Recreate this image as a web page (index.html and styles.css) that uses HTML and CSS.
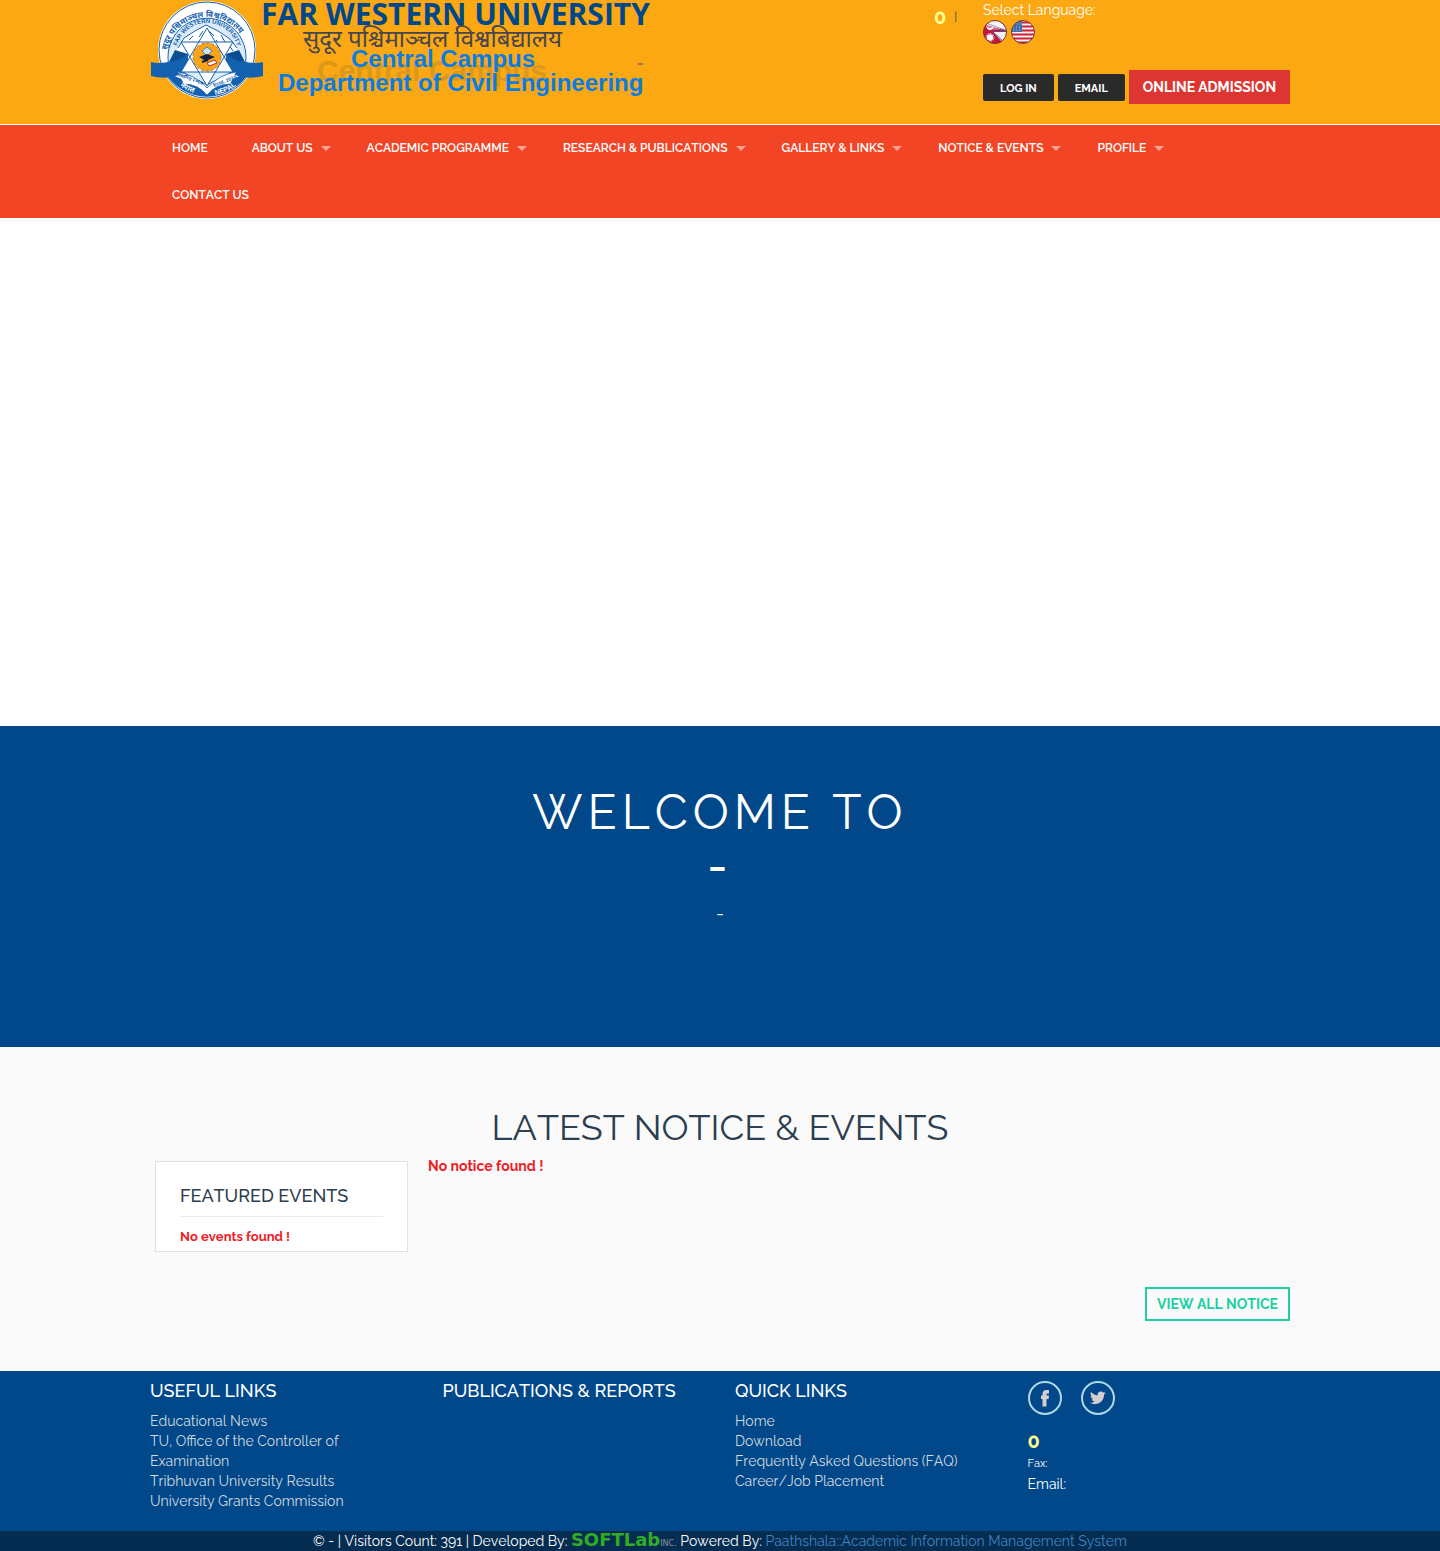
FILE: index.html
```html
<!DOCTYPE html>
<html lang="en">
<head>
<meta charset="utf-8">
<meta name="viewport" content="width=device-width, initial-scale=1">
<title>Far Western University</title>
<link rel="stylesheet" href="styles.css">
</head>
<body>
<header class="header">
  <div class="container header-row">
    <a class="logo" href="#">
      <svg width="500" height="104" viewBox="0 0 500 104" role="img" aria-label="Far Western University, Central Campus, Department of Civil Engineering">
        <defs>
          <path id="arc-outer" d="M16 58A41 41 0 1 1 98 58"/>
          <path id="arc-inner" d="M26 54A31 31 0 0 1 88 54"/>
          <path id="arc-foot" d="M28 84A45 45 0 0 0 88 84"/>
        </defs>
        <circle cx="57" cy="50" r="49" fill="#fff"/>
        <circle cx="57" cy="50" r="48" fill="none" stroke="#1461b0" stroke-width="1"/>
        <path d="M15 72A48 48 0 0 0 99 72L80 80L57 87L34 80Z" fill="#1461b0"/>
        <path d="M19 66A39 39 0 1 1 95 66L74 76L57 85L40 76Z" fill="#dcebf8" stroke="#1461b0"/>
        <path d="M22 60L32 39L44 31L56 25L68 31L82 40L92 60L80 66H34Z" fill="#fff"/>
        <path d="M28 48L34 38L45 31L56 25L68 31L80 39L87 48M39 40L43 36M49 37L53 31M59 31L64 36M71 35L75 42M34 47L38 43M79 45L83 51M66 40L69 44" fill="none" stroke="#1461b0" stroke-width="1"/>
        <path d="M1 62Q16 66 38 54V71Q20 81 1 76ZM113 62Q98 66 76 54V71Q94 81 113 76Z" fill="#1461b0"/>
        <path d="M38 54L25 50L19 62Q29 61 38 54ZM76 54L89 50L95 62Q85 61 76 54Z" fill="#0a4d93"/>
        <path d="M57 28L83 72H31ZM57 86L31 42H83Z" fill="#fff"/>
        <path d="M57 28L83 72H31ZM57 86L31 42H83Z" fill="none" stroke="#1461b0" stroke-width="1"/>
        <circle cx="57" cy="57" r="14" fill="#f8a51b" stroke="#b9741a" stroke-width="1" stroke-dasharray="3 2"/>
        <path d="M57 47L62 51L57 56L52 51Z" fill="#cfe5f5" stroke="#1461b0" stroke-width=".7"/>
        <path d="M49 57L57 54L65 57L56 61Z" fill="#15233b"/>
        <path d="M52 62L58 60" stroke="#15233b" stroke-width="2"/>
        <path d="M57 63L65 60L67 63L59 66Z" fill="#fff" stroke="#c22b33" stroke-width="1"/>
        <path d="M28 72Q44 74 57 88Q70 74 86 72L80 84Q66 84 57 95Q48 84 34 84Z" fill="#fff"/>
        <path d="M28 72Q44 74 57 88Q70 74 86 72M34 84Q48 84 57 95Q66 84 80 84" fill="none" stroke="#1461b0" stroke-width=".7"/>
        <text class="seal-dev"><textPath href="#arc-outer" startOffset="8">सुदूर पश्चिमाञ्चल विश्वविद्यालय</textPath></text>
        <text class="seal-name"><textPath href="#arc-inner" startOffset="8">FAR WESTERN UNIVERSITY</textPath></text>
        <text class="seal-date" transform="rotate(-20 74 82)" x="75" y="83">Estd. 2010</text>
        <text class="seal-date" transform="rotate(20 42 80)" x="41" y="81">स्थापित २०६७</text>
        <text class="seal-foot"><textPath href="#arc-foot" startOffset="3">नेपाल</textPath></text>
        <text class="seal-foot"><textPath href="#arc-foot" startOffset="40">NEPAL</textPath></text>
        <text class="ghost" aria-hidden="true" x="167" y="81" font-size="30">Central Campus</text>
        <text class="logo-title" x="111" y="25">FAR WESTERN UNIVERSITY</text>
        <text class="logo-dev" x="153" y="47">सुदूर पश्चिमाञ्चल विश्वबिद्यालय</text>
        <text class="logo-sub" x="201" y="67">Central Campus</text>
        <text class="logo-sub" x="128" y="91">Department of Civil Engineering</text>
        <path d="M488 64H493" stroke="#3a4f8f" stroke-width="1"/>
      </svg>
    </a>
    <p class="phone"><strong class="number">0</strong><span class="divider">|</span></p>
    <div class="tools">
      <span>Select Language:</span>
      <div class="flags">
        <a href="#" aria-label="Nepali"><svg width="24" height="24" viewBox="0 0 24 24"><defs><clipPath id="round"><circle cx="12" cy="12" r="11.500"/></clipPath></defs><g clip-path="url(#round)"><path fill="#f4f2f6" d="M0 0H24V24H0Z"/><path d="M0 4L24 11L10 12L21 24H0Z" fill="#c5163c"/><path d="M3 3L24 11M10 12L21 22M10 11.500H24" stroke="#54508c" stroke-width="1" fill="none"/><path d="M3 6Q7 10 11 6Q10 10 7 10Q4 10 3 6Z" fill="#fff"/><circle cx="7" cy="17.500" r="3.200" fill="#fff"/><circle cx="7" cy="17.500" r="4" fill="none" stroke="#fff" stroke-dasharray="1 1"/><ellipse cx="12" cy="5" rx="9" ry="5" fill="#fff" opacity=".35"/></g><circle cx="12" cy="12" r="11.500" fill="none" stroke="#7b2b26" stroke-width="1"/></svg></a>
        <a href="#" aria-label="English"><svg width="24" height="24" viewBox="0 0 24 24"><g clip-path="url(#round)"><path fill="#f7f3f3" d="M0 0H24V24H0Z"/><path d="M0 2.500H24M0 6.500H24M0 10.500H24M0 14.500H24M0 18.500H24M0 22.500H24" stroke="#cf2038" stroke-width="2"/><path fill="#3f70ad" d="M0 0H11V12H0Z"/><path d="M3 4H11M2 7H11M2 10H11" stroke="#a9c4e2" stroke-dasharray="1 2"/></g><circle cx="12" cy="12" r="11.500" fill="none" stroke="#7b3b36" stroke-width="1"/></svg></a>
      </div>
      <div class="actions">
        <button class="btn-dark" type="button">LOG IN</button>
        <button class="btn-dark" type="button">EMAIL</button>
        <button class="btn-red" type="button">ONLINE ADMISSION</button>
      </div>
    </div>
  </div>
</header>
<nav class="nav">
  <ul class="container nav-list">
    <li><a href="#">HOME</a></li>
    <li><a class="drop" href="#">ABOUT US</a></li>
    <li><a class="drop" href="#">ACADEMIC PROGRAMME</a></li>
    <li><a class="drop" href="#">RESEARCH &amp; PUBLICATIONS</a></li>
    <li><a class="drop" href="#">GALLERY &amp; LINKS</a></li>
    <li><a class="drop" href="#">NOTICE &amp; EVENTS</a></li>
    <li><a class="drop" href="#">PROFILE</a></li>
    <li><a href="#">CONTACT US</a></li>
  </ul>
</nav>
<main>
  <div class="slider"></div>
  <section class="welcome">
    <h1>WELCOME TO</h1>
    <h2>-</h2>
    <p>-</p>
  </section>
  <section class="notices">
    <div class="container">
      <h2 class="notices-title">LATEST NOTICE &amp; EVENTS</h2>
      <div class="notices-row">
        <aside class="events">
          <h3>FEATURED EVENTS</h3>
          <p>No events found !</p>
        </aside>
        <p class="no-notice">No notice found !</p>
      </div>
      <div class="more"><a class="btn-outline" href="#">VIEW ALL NOTICE</a></div>
    </div>
  </section>
</main>
<footer class="footer">
  <div class="container footer-grid">
    <div>
      <h4>USEFUL LINKS</h4>
      <ul>
        <li><a href="#">Educational News</a></li>
        <li><a href="#">TU, Office of the Controller of Examination</a></li>
        <li><a href="#">Tribhuvan University Results</a></li>
        <li><a href="#">University Grants Commission</a></li>
      </ul>
    </div>
    <div>
      <h4>PUBLICATIONS &amp; REPORTS</h4>
    </div>
    <div>
      <h4>QUICK LINKS</h4>
      <ul>
        <li><a href="#">Home</a></li>
        <li><a href="#">Download</a></li>
        <li><a href="#">Frequently Asked Questions (FAQ)</a></li>
        <li><a href="#">Career/Job Placement</a></li>
      </ul>
    </div>
    <div>
      <div class="social">
        <a href="#" aria-label="Facebook"><svg width="34" height="34" viewBox="0 0 34 34"><circle cx="17" cy="17" r="16" fill="none" stroke="#add8e6" stroke-width="2"/><path d="M14.500 25.500V18H13V14.500H14.500V13Q14.500 9 18.500 9H21V12.500H19.700Q18.500 12.500 18.500 13.500V14.500H21L20.600 18H18.500V25.500Z" fill="#d3cfcf"/></svg></a>
        <a href="#" aria-label="Twitter"><svg width="34" height="34" viewBox="0 0 34 34"><circle cx="17" cy="17" r="16" fill="none" stroke="#add8e6" stroke-width="2"/><path transform="translate(9 9) scale(.65)" d="M23.950 4.570a10 10 0 0 1-2.820.77 4.960 4.960 0 0 0 2.160-2.720c-.95.550-2 .95-3.130 1.180a4.920 4.920 0 0 0-8.380 4.480C7.690 8.090 4.070 6.130 1.640 3.160a4.920 4.920 0 0 0 1.520 6.570 4.900 4.900 0 0 1-2.230-.61v.06a4.920 4.920 0 0 0 3.950 4.830 5 5 0 0 1-2.210.08 4.940 4.940 0 0 0 4.600 3.420A9.870 9.870 0 0 1 0 19.540a13.990 13.990 0 0 0 7.550 2.210c9.050 0 14-7.500 14-13.980 0-.21 0-.42-.02-.63a9.940 9.940 0 0 0 2.460-2.550z" fill="#d3cfcf"/></svg></a>
      </div>
      <p class="number">0</p>
      <p class="fax">Fax:</p>
      <p>Email:</p>
    </div>
  </div>
  <div class="copyright">
    <span>© - | Visitors Count: 391 | Developed By: <a class="softlab" href="#">SOFTLab<small>INC.</small></a> Powered By: <a class="powered" href="#">Paathshala::Academic Information Management System</a></span>
  </div>
</footer>
</body>
</html>
```
FILE: styles.css
```css
* { box-sizing: border-box; }
body {
  margin: 0;
  font: 400 14px/20px Raleway, "Open Sans", sans-serif;
  font-kerning: none;
  color: #2c3e50;
  background: #fff;
}
h1, h2, h3, h4, p, ul { margin: 0; padding: 0; }
ul { list-style: none; }
a { text-decoration: none; }
svg { display: block; font-kerning: normal; }
button { font-family: inherit; border: 0; color: #fff; cursor: pointer; }
.container { width: 100%; max-width: 1140px; margin: 0 auto; }

.header { background: #fca812; color: #fff; border-bottom: 1px solid #fff; }
.header-row { display: flex; align-items: flex-start; padding-bottom: 20px; }
.logo { margin-right: auto; }
.number { color: #ffff8f; font-size: 20px; font-weight: 700; }
.phone { display: flex; align-items: center; gap: 8px; padding: 7px 26px 0 0; }
.divider { color: #00488a; font-size: 12px; }
.tools { width: 307px; }
.flags { display: flex; gap: 4px; margin-bottom: 26px; }
.actions { display: flex; align-items: center; gap: 4px; }
.btn-dark {
  height: 27px;
  padding: 2px 17px 0;
  border-radius: 2px;
  background: #2a2a2a;
  font-size: 11px;
  font-weight: 700;
}
.btn-red { flex: 1 0 auto; height: 34px; padding: 0 12px; background: #dd3531; font-size: 14px; font-weight: 700; }

.seal-dev { font: 700 8px "Noto Sans Devanagari", "Noto Sans", sans-serif; fill: #1461b0; }
.seal-name { font: 700 6px "Liberation Sans", sans-serif; fill: #1461b0; }
.seal-date { font: 700 5px "Liberation Sans", sans-serif; fill: #1461b0; text-anchor: middle; }
.seal-foot { font: 700 7px "Liberation Sans", sans-serif; fill: #fff; }
.logo-title { font: 700 30px "Open Sans", sans-serif; fill: #00488a; }
.logo-dev { font: 400 24px "Noto Sans Devanagari", "Noto Sans", sans-serif; fill: #45464f; }
.logo-sub { font: 700 24px "Liberation Sans", sans-serif; fill: #0a7de3; }
.ghost { font-family: "Liberation Sans", sans-serif; font-weight: 700; fill: #806a30; opacity: .25; }

.nav { background: #f14525; }
.nav-list { display: flex; flex-wrap: wrap; row-gap: 1px; }
.nav-list a {
  display: flex;
  align-items: center;
  height: 46px;
  padding: 0 22px;
  color: #fff;
  font-size: 12px;
  font-weight: 600;
}
.nav-list .drop { gap: 8px; padding-right: 14px; }
.drop::after { content: ""; border: 5px solid transparent; border-top-color: #f9a292; border-bottom: 0; }

.slider { height: 508px; }

.welcome { background: #00488a; color: #fff; text-align: center; padding: 60px 16px 120px; }
.welcome h1 { font-size: 48px; line-height: 52px; font-weight: 400; letter-spacing: 5px; }
.welcome h2 { font-size: 48px; line-height: 40px; font-weight: 500; letter-spacing: 5px; margin-top: 7px; }
.welcome p { font-size: 18px; line-height: 26px; margin-top: 16px; }

.notices { background: #fafafa; padding: 60px 0 50px; }
.notices-title { font-size: 36px; line-height: 40px; font-weight: 400; text-align: center; margin-bottom: 14px; }
.notices-row { display: flex; align-items: flex-start; gap: 20px; padding-left: 5px; }
.events { flex: 0 0 253px; padding: 24px 24px 4px; background: #fff; border: 1px solid #e1e1e1; }
.events h3 { font-size: 18px; line-height: 20px; font-weight: 500; padding-bottom: 10px; border-bottom: 1px solid #e8edf1; margin-bottom: 10px; }
.events p { font-size: 13px; font-weight: 700; color: #ee1c25; }
.no-notice { font-weight: 700; color: #ee1c25; margin-top: -5px; }
.more { display: flex; justify-content: flex-end; margin-top: 35px; }
.btn-outline { padding: 5px 10px; border: 2px solid #20d0a5; color: #20d0a5; font-weight: 700; }

.footer { background: #00488a; color: #fff; }
.footer-grid { display: grid; grid-template-columns: repeat(4, 1fr); gap: 30px; padding: 10px 0 20px; }
.footer h4 { font-size: 18px; line-height: 20px; font-weight: 500; margin-bottom: 10px; white-space: nowrap; }
.footer li a { color: #d3d9de; }
.social { display: flex; gap: 19px; margin-bottom: 16px; }
.fax { font-size: 11px; margin-top: 3px; }
.copyright { background: #052d52; text-align: center; }
.softlab { color: #2fae24; font: 700 18px/16px "DejaVu Sans", sans-serif; }
.softlab small { color: #8d9399; font: 400 8px/8px "DejaVu Sans", sans-serif; }
.powered { color: #3f84c0; }
```
